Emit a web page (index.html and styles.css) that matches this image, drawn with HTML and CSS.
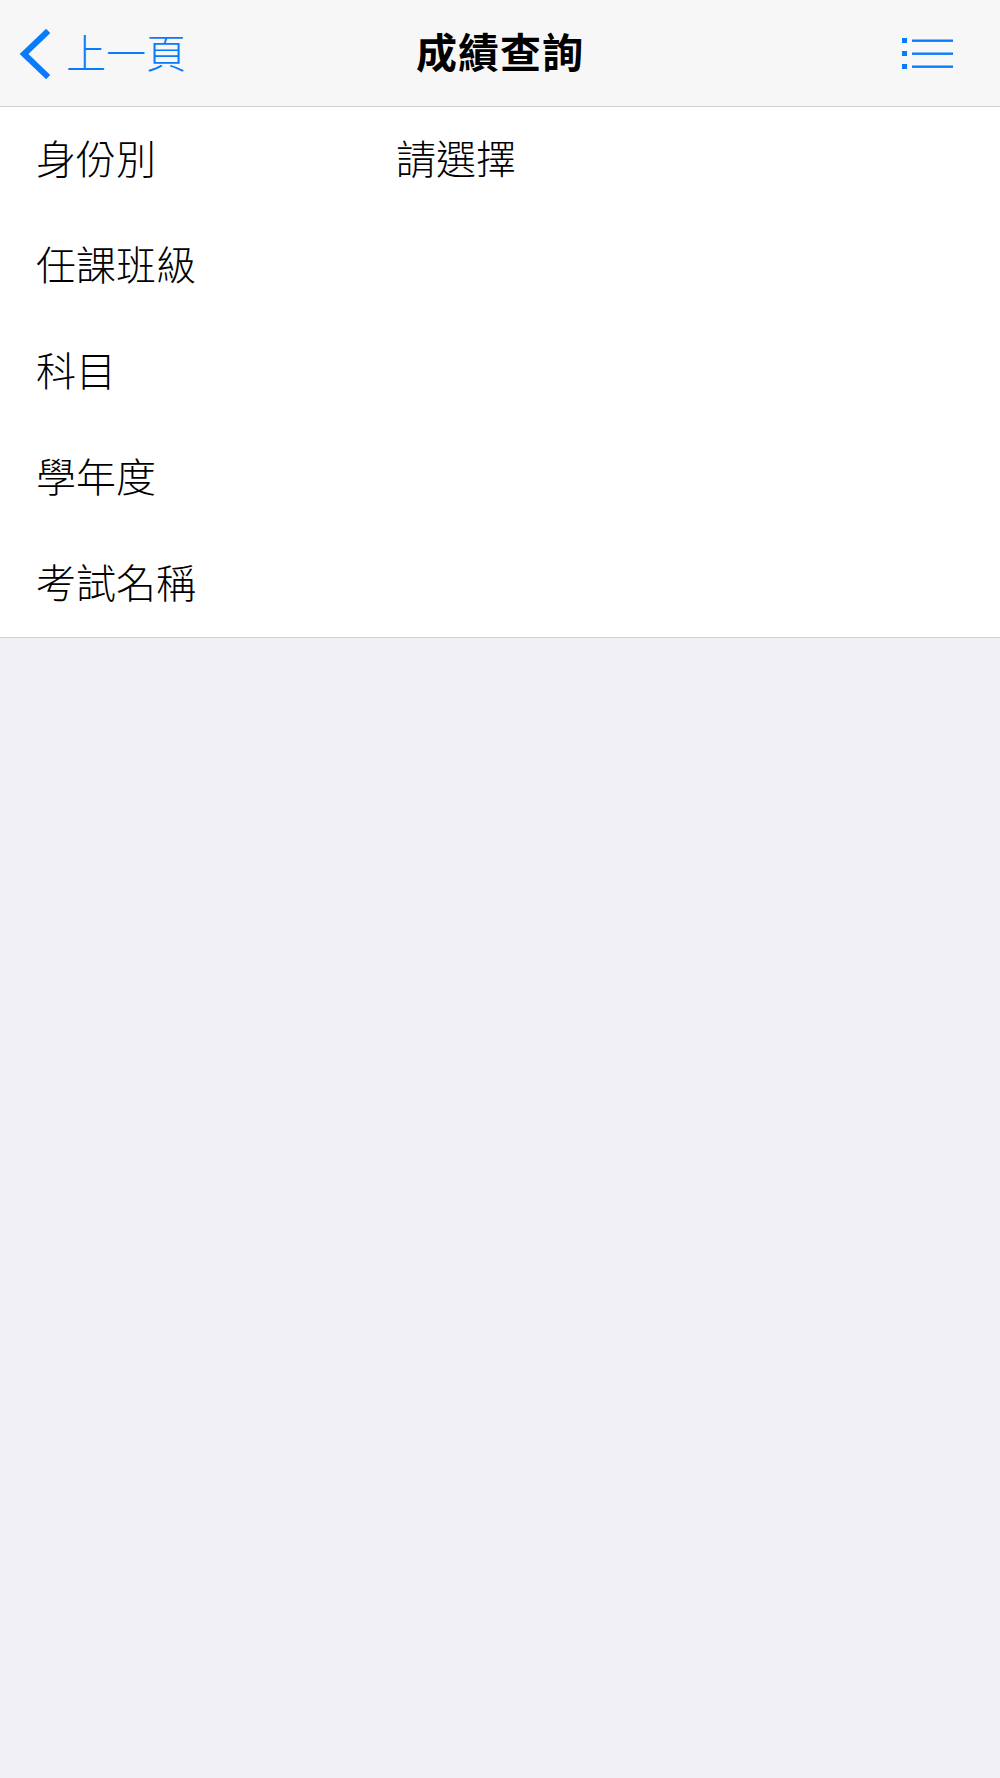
FILE: index.html
```html
<!DOCTYPE html>
<html lang="zh-Hant">
<head>
    <meta charset="UTF-8">
    <meta name="viewport" content="width=device-width, initial-scale=1.0">
    <title>成績查詢</title>
    <link rel="stylesheet" href="styles.css">
</head>
<body>

    <div id="nav-bar">
        <a class="nav-back" href="#">
            <svg class="back-icon" width="32" height="50" viewBox="0 0 32 50">
                <polyline points="28,4 6,25 28,46" fill="none" stroke="#0a7cfb" stroke-width="6" stroke-linecap="square" stroke-linejoin="miter"/>
            </svg>
            <span class="back-text">上一頁</span>
        </a>
        <h1 class="nav-title">成績查詢</h1>
        <a class="nav-menu" href="#">
            <svg width="52" height="32" viewBox="0 0 52 32">
                <rect x="0" y="0" width="5" height="5" fill="#0a7cfb"/>
                <rect x="0" y="13" width="5" height="5" fill="#0a7cfb"/>
                <rect x="0" y="26" width="5" height="5" fill="#0a7cfb"/>
                <rect x="10" y="1.5" width="41" height="2.4" fill="#0a7cfb"/>
                <rect x="10" y="14.5" width="41" height="2.4" fill="#0a7cfb"/>
                <rect x="10" y="27.5" width="41" height="2.4" fill="#0a7cfb"/>
            </svg>
        </a>
    </div>

    <ul id="query-list">
        <li class="query-item">
            <span class="query-label">身份別</span>
            <span class="query-value">請選擇</span>
        </li>
        <li class="query-item">
            <span class="query-label">任課班級</span>
            <span class="query-value"></span>
        </li>
        <li class="query-item">
            <span class="query-label">科目</span>
            <span class="query-value"></span>
        </li>
        <li class="query-item">
            <span class="query-label">學年度</span>
            <span class="query-value"></span>
        </li>
        <li class="query-item">
            <span class="query-label">考試名稱</span>
            <span class="query-value"></span>
        </li>
    </ul>

</body>
</html>
```

FILE: styles.css
```css
html, body {
    margin: 0;
    padding: 0;
}

body {
    font-family: "Noto Sans CJK TC", "Noto Sans CJK SC", sans-serif;
    background: #efeff4;
    color: #000;
    min-height: 1778px;
}

#nav-bar {
    display: grid;
    grid-template-columns: 1fr auto 1fr;
    align-items: center;
    height: 107px;
    background: #f7f7f7;
    border-bottom: 1px solid #d2d2d4;
    box-sizing: border-box;
}

.nav-back {
    display: flex;
    align-items: center;
    padding-left: 18px;
    color: #0a7cfb;
    text-decoration: none;
    font-size: 40px;
    font-weight: 300;
    line-height: 1;
}

.back-icon {
    margin-right: 16px;
    margin-top: 2px;
}

.back-text {
    padding-bottom: 4px;
}

.nav-title {
    margin: 0;
    padding-bottom: 6px;
    font-size: 41px;
    font-weight: bold;
    line-height: 1;
    letter-spacing: 1px;
}

.nav-menu {
    justify-self: end;
    display: flex;
    margin-right: 46px;
    margin-top: 2px;
}

#query-list {
    list-style-type: none;
    margin: 0;
    padding: 0;
    background: #fff;
    border-bottom: 1px solid #d2d2d6;
}

.query-item {
    display: flex;
    align-items: center;
    box-sizing: border-box;
    height: 106px;
    padding-left: 36px;
    padding-bottom: 6px;
    font-size: 40px;
    font-weight: 300;
    line-height: 1;
}

.query-label {
    width: 360px;
}
```
